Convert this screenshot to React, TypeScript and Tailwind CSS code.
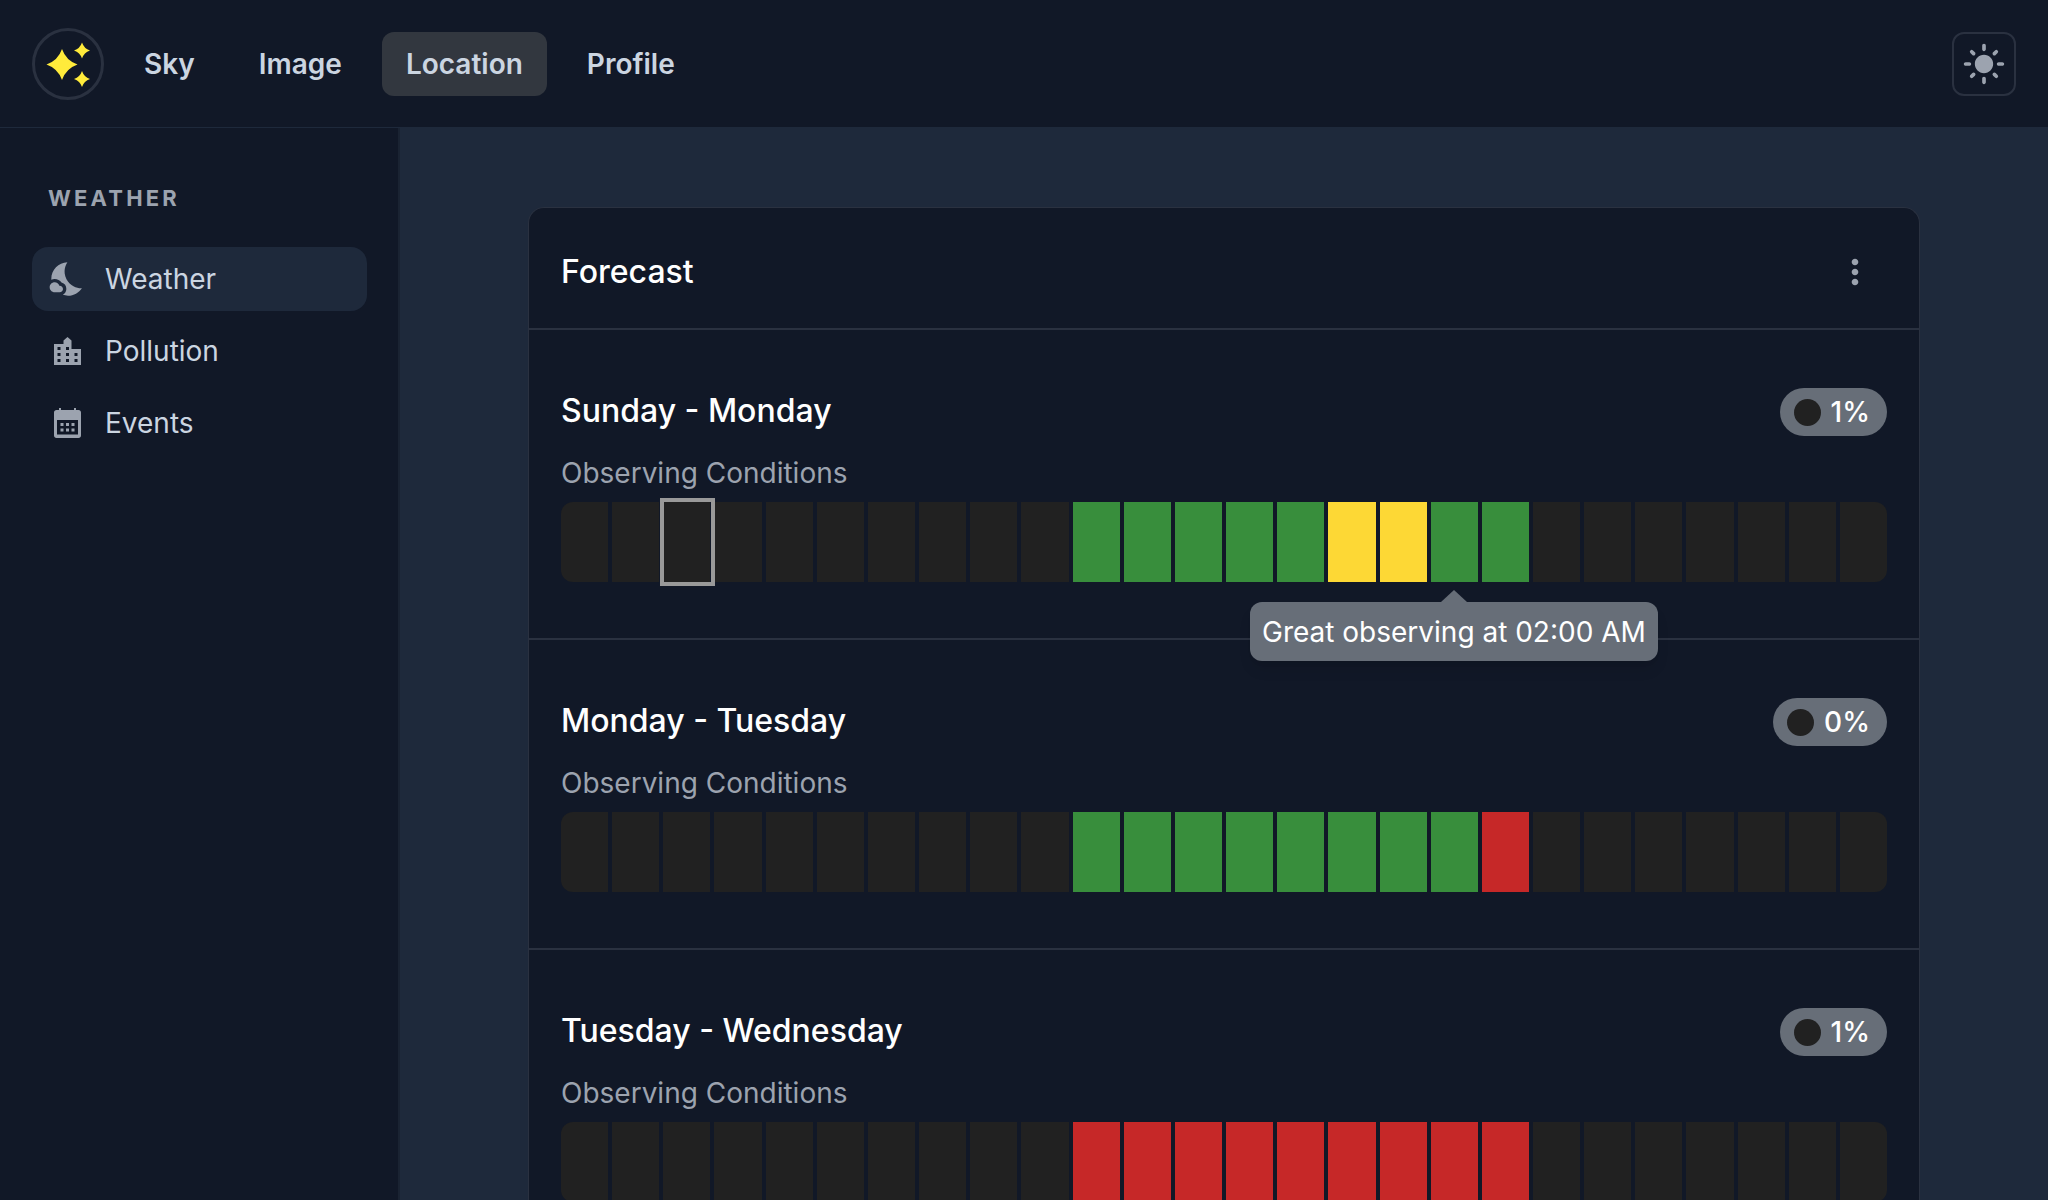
import { MdNightsStay, MdLightMode, MdMoreVert } from "react-icons/md";

type Cell = "off" | "good" | "fair" | "bad";

const cellColors: Record<Cell, string> = {
  off: "bg-[#212121]",
  good: "bg-[#388e3c]",
  fair: "bg-[#fdd835]",
  bad: "bg-[#c62828]",
};

function buildRow(middle: Cell[]): Cell[] {
  return [...Array(10).fill("off"), ...middle, ...Array(7).fill("off")];
}

const g: Cell = "good";
const y: Cell = "fair";
const r: Cell = "bad";

const days = [
  { title: "Sunday - Monday", pct: "1%", cells: buildRow([g, g, g, g, g, y, y, g, g]), active: true },
  { title: "Monday - Tuesday", pct: "0%", cells: buildRow([g, g, g, g, g, g, g, g, r]), active: false },
  { title: "Tuesday - Wednesday", pct: "1%", cells: buildRow([r, r, r, r, r, r, r, r, r]), active: false },
];

function LogoIcon() {
  return (
    <svg viewBox="0 0 72 72" className="w-[72px] h-[72px] shrink-0">
      <circle cx="36" cy="36" r="34.5" fill="none" stroke="#2a3140" strokeWidth="3" />
      <g fill="#ffeb3b">
        <path d="M30 21 Q34 32.5 45.5 36.5 Q34 40.5 30 52 Q26 40.5 14.5 36.5 Q26 32.5 30 21Z" />
        <path d="M50 14.5 Q52 20.5 58 22.5 Q52 24.5 50 30.5 Q48 24.5 42 22.5 Q48 20.5 50 14.5Z" />
        <path d="M50 43 Q52 49 58 51 Q52 53 50 59 Q48 53 42 51 Q48 49 50 43Z" />
      </g>
    </svg>
  );
}

function BuildingIcon() {
  return (
    <svg viewBox="0 0 27 28" className="w-[27px] h-[28px] text-[#9ca3af]" fill="currentColor">
      <path
        fillRule="evenodd"
        d="M0 7H9.5V3.5L13.5 0L17.5 3.5V12H27V28H0Z
           M3.5 10H6.5V13H3.5Z M12 10H15V13H12Z
           M3.5 16H6.5V19H3.5Z M12 16H15V19H12Z M20.5 16H23.5V19H20.5Z
           M3.5 22H6.5V25H3.5Z M12 22H15V25H12Z M20.5 22H23.5V25H20.5Z"
      />
    </svg>
  );
}

function CalendarIcon() {
  return (
    <svg viewBox="0 0 27 30" className="w-[27px] h-[30px] text-[#9ca3af]" fill="currentColor">
      <path
        fillRule="evenodd"
        d="M5 0H7V2H20V0H22V2H24.5C26 2 27 3 27 4.5V27.5C27 29 26 30 24.5 30H2.5C1 30 0 29 0 27.5V4.5C0 3 1 2 2.5 2H5Z
           M3 12V26.5H24V12Z"
      />
      <path d="M6.5 15H9.5V18H6.5Z M12 15H15V18H12Z M17.5 15H20.5V18H17.5Z M6.5 20.5H9.5V23.5H6.5Z M12 20.5H15V23.5H12Z M17.5 20.5H20.5V23.5H17.5Z" />
    </svg>
  );
}

function DayRow({ day }: { day: (typeof days)[number] }) {
  return (
    <section className="border-t-[2px] border-[#2a3140] px-[32px] pt-[58px] pb-[56px]">
      <div className="flex items-center justify-between h-[48px]">
        <h3 className="-mt-[2px] text-[32px] font-medium text-white">{day.title}</h3>
        <div className="flex items-center h-[48px] rounded-full bg-[#676e78] pl-[14px] pr-[17px] gap-[10px]">
          <span className="w-[27px] h-[27px] rounded-full bg-[#212121]"></span>
          <span className="text-[28px] font-medium text-white">{day.pct}</span>
        </div>
      </div>
      <p className="mt-[17px] text-[28px] leading-[40px] text-[#9ca3af]">Observing Conditions</p>
      <div className="relative mt-[9px]">
        <div className="flex gap-[4px] h-[80px] rounded-xl overflow-hidden">
          {day.cells.map((c, i) => (
            <div key={i} className={`flex-1 ${cellColors[c]}`}></div>
          ))}
        </div>
        {day.active && (
          <>
            <div className="absolute left-[99px] -top-[4px] w-[55px] h-[88px] border-[4px] border-[#999999]"></div>
            <div className="absolute left-[689px] top-[100px] z-10 h-[59px] rounded-xl bg-[#676e78] px-[12px] flex items-center text-[28px] text-white shadow-lg whitespace-nowrap">
              <span className="absolute left-1/2 -translate-x-1/2 -top-[12px] w-0 h-0 border-x-[13px] border-x-transparent border-b-[12px] border-b-[#676e78]"></span>
              Great observing at 02:00 AM
            </div>
          </>
        )}
      </div>
    </section>
  );
}

export default function App() {
  return (
    <div className="h-screen overflow-hidden flex flex-col bg-[#1e293b] font-['Inter',sans-serif]">
      {/* Top bar */}
      <header className="h-[128px] shrink-0 flex items-center justify-between bg-[#111827] border-b border-[#1e293b] pt-px px-8">
        <div className="flex items-center">
          <LogoIcon />
          <nav className="flex items-center gap-[16px] ml-[16px] text-[28px] font-semibold text-[#cbd5e1]">
            <a className="px-6 h-[64px] flex items-center">Sky</a>
            <a className="px-6 h-[64px] flex items-center">Image</a>
            <a className="px-6 h-[64px] flex items-center rounded-xl bg-[#32373f]">Location</a>
            <a className="px-6 h-[64px] flex items-center">Profile</a>
          </nav>
        </div>
        <button className="w-[64px] h-[64px] rounded-xl border-[2px] border-[#2a3140] flex items-center justify-center">
          <MdLightMode className="w-[44px] h-[44px] text-[#9ca3af]" />
        </button>
      </header>

      <div className="flex flex-1 min-h-0">
        {/* Sidebar */}
        <aside className="w-[400px] shrink-0 bg-[#111827] border-r-[2px] border-[#1a2332] pl-8 pr-[31px] pt-[55px]">
          <h2 className="pl-[16px] text-[22px] leading-[30px] font-bold tracking-[3.2px] text-[#9ca3af]">WEATHER</h2>
          <ul className="mt-[34px] flex flex-col gap-[8px] text-[28px] text-[#cbd5e1]">
            <li className="h-[64px] flex items-center gap-[17px] pl-[16px] rounded-2xl bg-[#1e293b]">
              <span className="w-[40px] h-[40px] flex items-center justify-center">
                <MdNightsStay className="w-[40px] h-[40px] text-[#9ca3af]" />
              </span>
              <span>Weather</span>
            </li>
            <li className="h-[64px] flex items-center gap-[17px] pl-[15px] pr-[1px] rounded-2xl">
              <span className="w-[40px] h-[40px] mr-[1px] flex items-center justify-center">
                <BuildingIcon />
              </span>
              <span>Pollution</span>
            </li>
            <li className="h-[64px] flex items-center gap-[17px] pl-[15px] pr-[1px] rounded-2xl">
              <span className="w-[40px] h-[40px] mr-[1px] flex items-center justify-center">
                <CalendarIcon />
              </span>
              <span>Events</span>
            </li>
          </ul>
        </aside>

        {/* Main */}
        <main className="flex-1 min-w-0 pt-[79px] pl-[128px] pr-[128px]">
          <div className="rounded-t-2xl bg-[#111827] border border-[#2a3140] border-b-0">
            <div className="h-[120px] pt-[8px] flex items-center justify-between px-[32px]">
              <h2 className="text-[32px] font-medium text-white">Forecast</h2>
              <MdMoreVert className="w-[40px] h-[40px] mr-[12px] text-[#9ca3af]" />
            </div>
            {days.map((d) => (
              <DayRow key={d.title} day={d} />
            ))}
          </div>
        </main>
      </div>
    </div>
  );
}
